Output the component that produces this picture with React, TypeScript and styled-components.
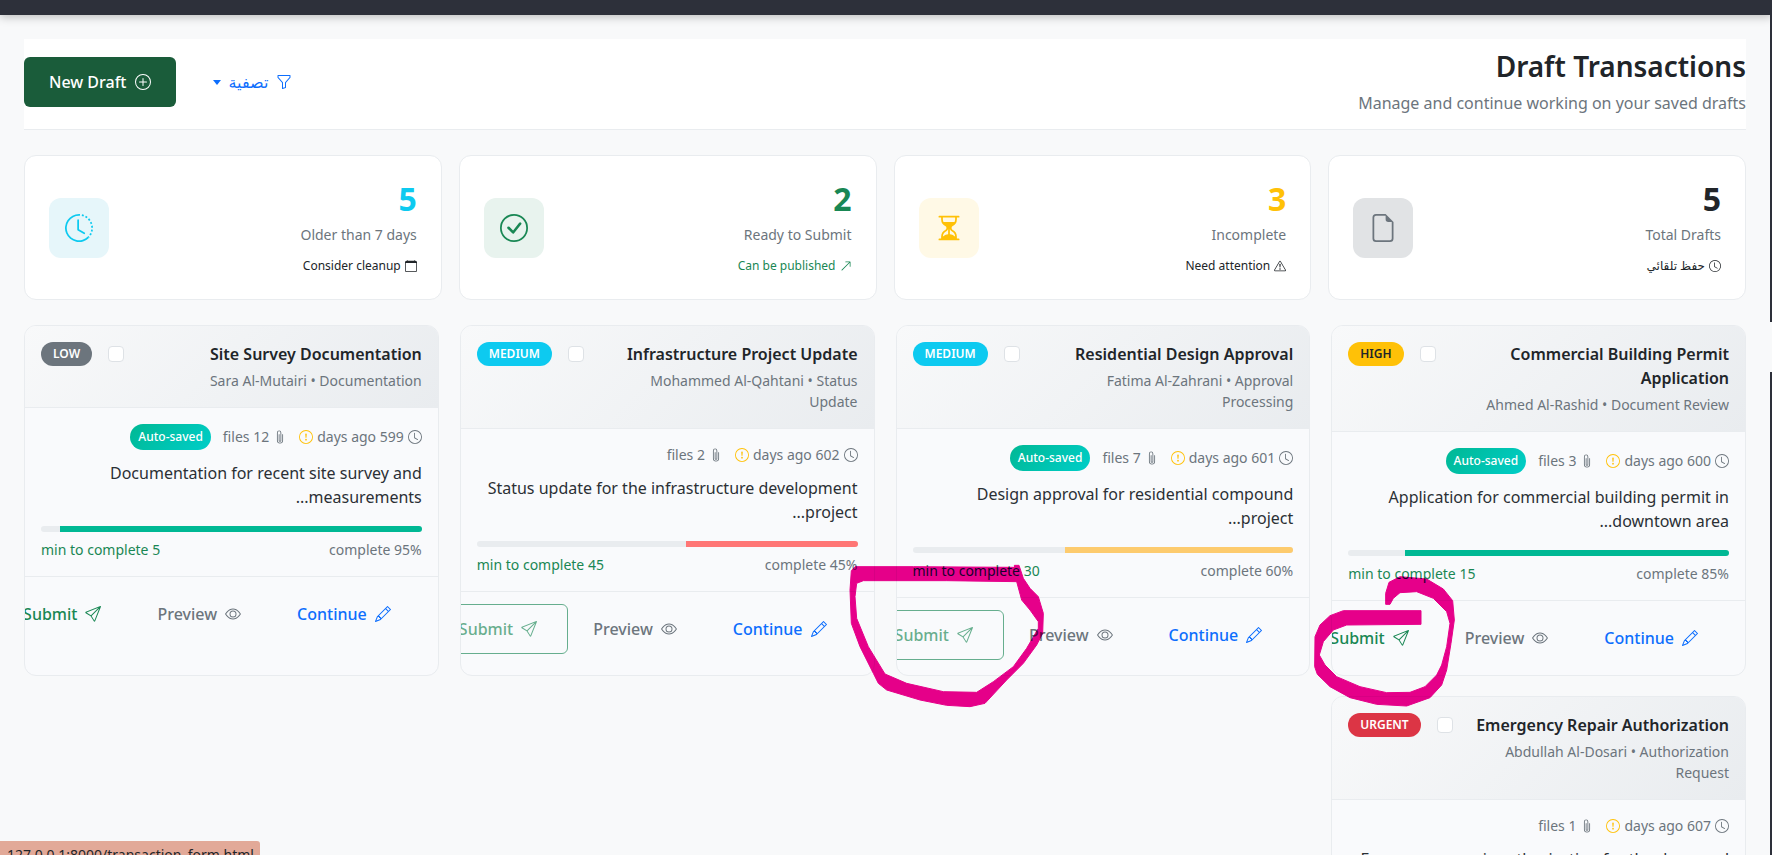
import {
	BsArrowUpRight,
	BsCalendar,
	BsCheckCircle,
	BsClock,
	BsClockHistory,
	BsExclamationCircle,
	BsExclamationTriangle,
	BsEye,
	BsFileEarmark,
	BsFunnel,
	BsHourglassSplit,
	BsPaperclip,
	BsPencil,
	BsPlusCircle,
	BsSend,
} from "react-icons/bs";
import type { ReactNode } from "react";
import styled, { createGlobalStyle } from "styled-components";

const GlobalStyle = createGlobalStyle`
	html, body {
		margin: 0;
		height: 855px;
		overflow: hidden;
		background-color: #f8f9fa;
		font-family: "Noto Sans", "DejaVu Sans", sans-serif;
		color: #212529;
	}
	* {
		box-sizing: border-box;
	}
`;

const TopBar = styled.div`
	height: 15px;
	background-color: #2d303a;
	box-shadow: 0 2px 10px rgba(0, 0, 0, 0.25);
`;

const EdgeStrip = styled.div<{ $top: number; $height: number }>`
	position: fixed;
	right: 0;
	top: ${(p) => p.$top}px;
	width: 2px;
	height: ${(p) => p.$height}px;
	background-color: #2d303a;
`;

const Main = styled.main`
	padding: 24px 26px 0 24px;
`;

const PageHeader = styled.header`
	display: flex;
	align-items: center;
	justify-content: space-between;
	height: 91px;
	padding-bottom: 5px;
	background-color: #fff;
	border-bottom: 1px solid #e9ecef;
	margin-bottom: 25px;
`;

const HeaderTitle = styled.h1`
	margin: 0 0 8px;
	font-size: 28px;
	line-height: 34px;
	font-weight: 600;
`;

const HeaderSub = styled.p`
	margin: 0;
	font-size: 16px;
	line-height: 24px;
	color: #6c757d;
`;

const HeaderActions = styled.div`
	display: flex;
	align-items: center;
	gap: 13px;
`;

const FilterButton = styled.button`
	display: flex;
	align-items: center;
	gap: 8px;
	padding: 12px 24px;
	border: 0;
	background: none;
	color: #0d6efd;
	font: inherit;
	font-size: 16px;
	line-height: 24px;
`;

const Caret = styled.span`
	width: 0;
	height: 0;
	margin-top: 2px;
	border-top: 5px solid #0d6efd;
	border-left: 4px solid transparent;
	border-right: 4px solid transparent;
`;

const NewDraftButton = styled.button`
	display: flex;
	align-items: center;
	gap: 8px;
	height: 50px;
	padding: 0 25px;
	border: 0;
	border-radius: 6px;
	background-color: #1a5c3a;
	color: #fff;
	font: inherit;
	font-size: 16px;
	font-weight: 500;
`;

const StatsGrid = styled.section`
	display: grid;
	grid-template-columns: repeat(4, 1fr);
	gap: 17px;
	margin-bottom: 25px;
`;

const StatCard = styled.div`
	display: flex;
	align-items: center;
	justify-content: space-between;
	padding: 24px;
	background-color: #fff;
	border: 1px solid #e9ecef;
	border-radius: 12px;
`;

const StatValue = styled.div<{ $color: string }>`
	font-size: 32px;
	line-height: 38px;
	font-weight: 700;
	color: ${(p) => p.$color};
`;

const StatLabel = styled.div`
	margin-top: 6px;
	font-size: 14px;
	line-height: 21px;
	color: #6c757d;
`;

const StatNote = styled.div<{ $color: string }>`
	display: flex;
	align-items: center;
	gap: 4px;
	margin-top: 12px;
	font-size: 12px;
	line-height: 18px;
	color: ${(p) => p.$color};
`;

const StatIcon = styled.div<{ $color: string; $bg: string }>`
	display: flex;
	align-items: center;
	justify-content: center;
	width: 60px;
	height: 60px;
	border-radius: 12px;
	font-size: 28px;
	color: ${(p) => p.$color};
	background-color: ${(p) => p.$bg};
`;

const CardsGrid = styled.section`
	display: grid;
	grid-template-columns: repeat(4, 1fr);
	column-gap: 21px;
	row-gap: 20px;
`;

const DraftCard = styled.article`
	background-color: #f9fafc;
	border: 1px solid #e9ecef;
	border-radius: 12px;
	overflow: hidden;
`;

const CardHeader = styled.div`
	display: flex;
	align-items: flex-start;
	justify-content: space-between;
	gap: 16px;
	padding: 16px;
	background: linear-gradient(135deg, #f8f9fa, #e9ecef);
	border-bottom: 1px solid #e9ecef;
`;

const CardTitle = styled.h3`
	margin: 0 0 4px;
	font-size: 16px;
	line-height: 24px;
	font-weight: 600;
`;

const CardSub = styled.p`
	margin: 0;
	font-size: 14px;
	line-height: 21px;
	color: #6c757d;
`;

const HeaderControls = styled.div`
	display: flex;
	flex-direction: row-reverse;
	align-items: flex-start;
	flex-shrink: 0;
	gap: 16px;
`;

const Checkbox = styled.span`
	display: block;
	width: 16px;
	height: 16px;
	margin-top: 4px;
	background-color: #fff;
	border: 1px solid #dee2e6;
	border-radius: 4px;
`;

const PriorityBadge = styled.span<{ $bg: string; $color: string }>`
	padding: 3px 12px;
	border-radius: 12px;
	font-size: 12px;
	line-height: 18px;
	font-weight: 600;
	background-color: ${(p) => p.$bg};
	color: ${(p) => p.$color};
`;

const CardBody = styled.div`
	padding: 16px;
`;

const MetaRow = styled.div`
	display: flex;
	align-items: center;
	gap: 12px;
	margin-bottom: 11px;
`;

const MetaItem = styled.span`
	display: inline-flex;
	align-items: center;
	gap: 4px;
	font-size: 14px;
	line-height: 20px;
	color: #6c757d;
	svg {
		flex-shrink: 0;
		font-size: 14px;
	}
`;

const WarnMark = styled(BsExclamationCircle)`
	color: #ffc107;
`;

const AutoSaved = styled.span`
	padding: 4px 8px;
	border-radius: 13px;
	font-size: 12px;
	line-height: 18px;
	font-weight: 500;
	color: #fff;
	background: linear-gradient(135deg, #00b894, #00cec9);
`;

const Description = styled.p`
	margin: 0 0 17px;
	font-size: 16px;
	line-height: 24px;
	color: #2b3035;
`;

const ProgressTrack = styled.div`
	height: 6px;
	margin-bottom: 7px;
	border-radius: 3px;
	background-color: #e9ecef;
	overflow: hidden;
`;

const ProgressFill = styled.div<{ $color: string }>`
	height: 100%;
	background-color: ${(p) => p.$color};
`;

const ProgressInfo = styled.div`
	display: flex;
	justify-content: space-between;
	font-size: 14px;
	line-height: 21px;
	color: #6c757d;
`;

const TimeLeft = styled.span`
	color: #198754;
`;

const CardFooter = styled.div`
	display: flex;
	padding: 12px 16px;
	border-top: 1px solid #e9ecef;
`;

const ActionButton = styled.button<{ $color: string; $outlined?: boolean }>`
	display: flex;
	flex-shrink: 0;
	align-items: center;
	gap: 8px;
	height: 50px;
	padding-inline: 30px 24px;
	background: none;
	border: 1px solid ${(p) => (p.$outlined ? p.$color : "transparent")};
	border-radius: 6px;
	font: inherit;
	font-size: 16px;
	font-weight: 500;
	color: ${(p) => p.$color};
	opacity: ${(p) => (p.$outlined ? 0.65 : 1)};
`;

const LinkPreview = styled.div`
	position: fixed;
	left: 0;
	bottom: 0;
	width: 260px;
	height: 14px;
	padding: 4px 0 0 7px;
	overflow: hidden;
	direction: ltr;
	font-size: 14px;
	line-height: 20px;
	color: #212529;
	background-color: #e2a998;
	border-top-right-radius: 3px;
`;

const Scribble = styled.svg<{ $left: number; $top: number }>`
	position: fixed;
	left: ${(p) => p.$left}px;
	top: ${(p) => p.$top}px;
	mix-blend-mode: multiply;
	path {
		fill: #ec008c;
		stroke: #ec008c;
		stroke-width: 3;
		stroke-linejoin: round;
	}
`;

interface Stat {
	value: number;
	label: string;
	note: string;
	noteColor: string;
	noteIcon: ReactNode;
	color: string;
	bg: string;
	icon: ReactNode;
}

const STATS: Stat[] = [
	{
		value: 5,
		label: "Total Drafts",
		note: "حفظ تلقائي",
		noteColor: "#212529",
		noteIcon: <BsClock />,
		color: "#212529",
		bg: "#e1e3e5",
		icon: <BsFileEarmark color="#6c757d" />,
	},
	{
		value: 3,
		label: "Incomplete",
		note: "Need attention",
		noteColor: "#212529",
		noteIcon: <BsExclamationTriangle />,
		color: "#ffc107",
		bg: "#fff9e6",
		icon: <BsHourglassSplit />,
	},
	{
		value: 2,
		label: "Ready to Submit",
		note: "Can be published",
		noteColor: "#198754",
		noteIcon: <BsArrowUpRight />,
		color: "#198754",
		bg: "#e8f3ee",
		icon: <BsCheckCircle />,
	},
	{
		value: 5,
		label: "Older than 7 days",
		note: "Consider cleanup",
		noteColor: "#212529",
		noteIcon: <BsCalendar />,
		color: "#0dcaf0",
		bg: "#e6f6fa",
		icon: <BsClockHistory />,
	},
];

const PRIORITY = {
	LOW: { bg: "#6c757d", color: "#fff" },
	MEDIUM: { bg: "#0dcaf0", color: "#fff" },
	HIGH: { bg: "#ffc107", color: "#212529" },
	URGENT: { bg: "#dc3545", color: "#fff" },
};

interface Draft {
	title: string;
	sub: string;
	priority: keyof typeof PRIORITY;
	days: number;
	files: number;
	autoSaved: boolean;
	description: string;
	progress: number;
	barColor: string;
	minutes: number;
	outlined: boolean;
}

const DRAFTS: Draft[] = [
	{
		title: "Commercial Building Permit Application",
		sub: "Ahmed Al-Rashid • Document Review",
		priority: "HIGH",
		days: 600,
		files: 3,
		autoSaved: true,
		description: "Application for commercial building permit in downtown area...",
		progress: 85,
		barColor: "#00b894",
		minutes: 15,
		outlined: false,
	},
	{
		title: "Residential Design Approval",
		sub: "Fatima Al-Zahrani • Approval Processing",
		priority: "MEDIUM",
		days: 601,
		files: 7,
		autoSaved: true,
		description: "Design approval for residential compound project...",
		progress: 60,
		barColor: "#fdcb6e",
		minutes: 30,
		outlined: true,
	},
	{
		title: "Infrastructure Project Update",
		sub: "Mohammed Al-Qahtani • Status Update",
		priority: "MEDIUM",
		days: 602,
		files: 2,
		autoSaved: false,
		description: "Status update for the infrastructure development project...",
		progress: 45,
		barColor: "#ff7675",
		minutes: 45,
		outlined: true,
	},
	{
		title: "Site Survey Documentation",
		sub: "Sara Al-Mutairi • Documentation",
		priority: "LOW",
		days: 599,
		files: 12,
		autoSaved: true,
		description: "Documentation for recent site survey and measurements...",
		progress: 95,
		barColor: "#00b894",
		minutes: 5,
		outlined: false,
	},
	{
		title: "Emergency Repair Authorization",
		sub: "Abdullah Al-Dosari • Authorization Request",
		priority: "URGENT",
		days: 607,
		files: 1,
		autoSaved: false,
		description: "Emergency repair authorization for the damaged site facilities...",
		progress: 30,
		barColor: "#ff7675",
		minutes: 60,
		outlined: false,
	},
];

const DraftItem = ({ draft }: { draft: Draft }): JSX.Element => (
	<DraftCard>
		<CardHeader>
			<div>
				<CardTitle>{draft.title}</CardTitle>
				<CardSub>{draft.sub}</CardSub>
			</div>
			<HeaderControls>
				<PriorityBadge $bg={PRIORITY[draft.priority].bg} $color={PRIORITY[draft.priority].color}>
					{draft.priority}
				</PriorityBadge>
				<Checkbox />
			</HeaderControls>
		</CardHeader>
		<CardBody>
			<MetaRow>
				<MetaItem>
					<BsClock />
					<span>{draft.days} days ago</span>
					<WarnMark />
				</MetaItem>
				<MetaItem>
					<BsPaperclip />
					<span>{draft.files} files</span>
				</MetaItem>
				{draft.autoSaved && <AutoSaved>Auto-saved</AutoSaved>}
			</MetaRow>
			<Description>{draft.description}</Description>
			<ProgressTrack>
				<ProgressFill $color={draft.barColor} style={{ width: `${draft.progress}%` }} />
			</ProgressTrack>
			<ProgressInfo>
				<span>{draft.progress}% complete</span>
				<TimeLeft>{draft.minutes} min to complete</TimeLeft>
			</ProgressInfo>
		</CardBody>
		<CardFooter>
			<ActionButton $color="#0d6efd">
				<BsPencil />
				Continue
			</ActionButton>
			<ActionButton $color="#6c757d">
				<BsEye />
				Preview
			</ActionButton>
			<ActionButton $color="#198754" $outlined={draft.outlined}>
				<BsSend />
				Submit
			</ActionButton>
		</CardFooter>
	</DraftCard>
);

const App = (): JSX.Element => (
	<div dir="rtl">
		<GlobalStyle />
		<TopBar />
		<Main>
			<PageHeader>
				<div>
					<HeaderTitle>Draft Transactions</HeaderTitle>
					<HeaderSub>Manage and continue working on your saved drafts</HeaderSub>
				</div>
				<HeaderActions>
					<FilterButton>
						<BsFunnel />
						تصفية
						<Caret />
					</FilterButton>
					<NewDraftButton>
						<BsPlusCircle />
						New Draft
					</NewDraftButton>
				</HeaderActions>
			</PageHeader>
			<StatsGrid>
				{STATS.map((stat) => (
					<StatCard key={stat.label}>
						<div>
							<StatValue $color={stat.color}>{stat.value}</StatValue>
							<StatLabel>{stat.label}</StatLabel>
							<StatNote $color={stat.noteColor}>
								{stat.noteIcon}
								{stat.note}
							</StatNote>
						</div>
						<StatIcon $color={stat.color} $bg={stat.bg}>
							{stat.icon}
						</StatIcon>
					</StatCard>
				))}
			</StatsGrid>
			<CardsGrid>
				{DRAFTS.map((draft) => (
					<DraftItem key={draft.title} draft={draft} />
				))}
			</CardsGrid>
		</Main>
		<EdgeStrip $top={0} $height={322} />
		<EdgeStrip $top={372} $height={483} />
		<Scribble $left={830} $top={550} width={230} height={170} viewBox="0 0 690 510">
			<path d="M553 46 L567 46 L580 85 L600 115 L625 140 L640 190 L638 250 L620 285 L580 340 L530 390 L465 460 L420 470 L350 466 L270 450 L170 420 L145 400 L130 370 L90 290 L64 220 L60 120 L64 62 L75 50 L250 50 L553 52 L560 95 L350 92 L100 92 L80 100 L75 140 L80 205 L115 290 L165 372 L230 400 L340 425 L440 427 L490 395 L550 350 L590 295 L625 235 L625 215 L600 180 L575 150 L560 95 Z" />
		</Scribble>
		<Scribble $left={1300} $top={570} width={170} height={150} viewBox="0 0 510 450">
			<path d="M363 122 L130 122 L90 137 L60 165 L45 200 L44 290 L52 313 L90 350 L150 383 L230 403 L320 408 L390 383 L425 345 L440 300 L453 220 L463 150 L458 92 L430 57 L380 27 L300 20 L267 37 L257 70 L257 103 L270 103 L280 85 L300 68 L350 65 L400 85 L440 125 L450 160 L440 230 L425 285 L410 315 L375 350 L330 367 L260 368 L180 350 L110 320 L75 285 L58 255 L70 215 L100 180 L140 165 L363 163 Z" />
		</Scribble>
		<LinkPreview>127.0.0.1:8000/transaction_form.html</LinkPreview>
	</div>
);

export default App;
